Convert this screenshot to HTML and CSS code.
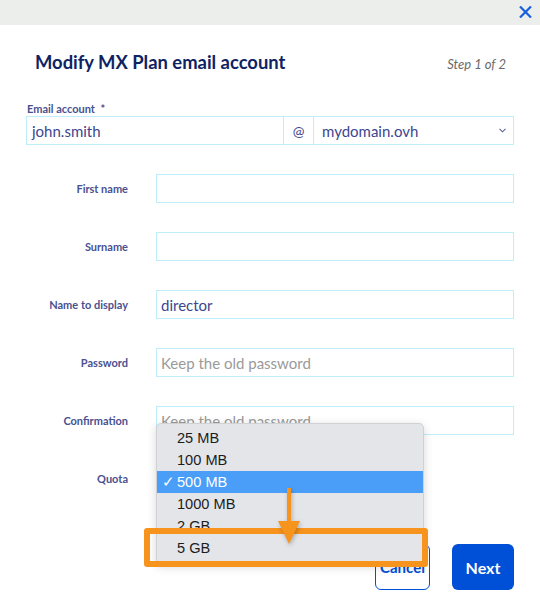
FILE: index.html
```html
<!DOCTYPE html>
<html lang="en">
<head>
<meta charset="utf-8">
<title>Modify MX Plan email account</title>
<link rel="stylesheet" href="styles.css">
</head>
<body>
<div class="topbar">
  <button class="close" aria-label="Close">
    <svg width="13" height="12" viewBox="0 0 13 12"><path d="M1 0.5 L12 11.5 M12 0.5 L1 11.5" stroke="#1a5fdb" stroke-width="2.2" fill="none"/></svg>
  </button>
</div>
<main class="modal">
  <header class="head">
    <h1 class="title">Modify MX Plan email account</h1>
    <span class="step">Step 1 of 2</span>
  </header>

  <div class="email-field">
    <div class="lbl-top">Email account <span class="req">*</span></div>
    <div class="group">
      <div class="inp user">john.smith</div>
      <div class="at">@</div>
      <div class="inp sel">
        <span>mydomain.ovh</span>
        <svg class="chev" width="7" height="5" viewBox="0 0 7 5"><path d="M0.5 0.8 L3.5 3.8 L6.5 0.8" stroke="#5a6190" stroke-width="1.1" fill="none"/></svg>
      </div>
    </div>
  </div>

  <div class="rows">
    <div class="row"><span class="lbl">First name</span><div class="inp"></div></div>
    <div class="row"><span class="lbl">Surname</span><div class="inp"></div></div>
    <div class="row"><span class="lbl">Name to display</span><div class="inp">director</div></div>
    <div class="row"><span class="lbl">Password</span><div class="inp ph">Keep the old password</div></div>
    <div class="row"><span class="lbl">Confirmation</span><div class="inp ph">Keep the old password</div></div>
    <div class="row"><span class="lbl">Quota</span>
      <div class="quota-slot">
        <ul class="dropdown">
          <li>25 MB</li>
          <li>100 MB</li>
          <li class="active"><span class="check">✓</span>500 MB</li>
          <li>1000 MB</li>
          <li>2 GB</li>
          <li>5 GB</li>
        </ul>
        <div class="highlight"></div>
        <svg class="arrow" width="24" height="58" viewBox="0 0 24 58">
          <path d="M10 0 H14 V33 H23 L12 56 L1 33 H10 Z" fill="#f7941d"/>
        </svg>
      </div>
    </div>
  </div>

  <div class="footer">
    <button class="btn cancel">Cancel</button>
    <button class="btn next">Next</button>
  </div>
</main>
</body>
</html>
```
FILE: styles.css
```css
* { box-sizing: border-box; }
html, body { margin: 0; padding: 0; background: #fff; }
body { font-family: Lato, "Open Sans", sans-serif; width: 540px; height: 608px; overflow: hidden; }

.topbar {
  height: 25px;
  background: #eceeec;
  display: flex;
  justify-content: flex-end;
  align-items: center;
  padding-right: 8px;
}
.close { border: 0; background: none; padding: 0; margin: 0; display: flex; margin-top: -1px; }

.modal { padding: 0 26px 0 26px; }

.head {
  margin-top: 27px;
  height: 20px;
  display: flex;
  justify-content: space-between;
  align-items: baseline;
  padding: 0 8px 0 9px;
}
.title {
  margin: 0;
  font-size: 18.4px;
  line-height: 20px;
  font-weight: 700;
  color: #0e2363;
}
.step {
  font-size: 13px;
  font-style: italic;
  color: #6a6a6a;
}

.email-field { margin-top: 30px; }
.lbl-top {
  font-size: 11px;
  line-height: 14px;
  font-weight: 700;
  color: #4a5190;
  padding-left: 1px;
}
.req { margin-left: 3px; }

.group { display: flex; height: 29px; }
.inp {
  height: 29px;
  border: 1px solid #bdeefa;
  display: flex;
  align-items: center;
  padding-left: 4px;
  font-size: 15px;
  color: #3d4690;
}
.user { width: 258px; padding-left: 5px; }
.at {
  width: 29px;
  height: 29px;
  border: 1px solid #bdeefa;
  border-left: 0;
  border-right: 0;
  display: flex;
  align-items: center;
  justify-content: center;
  font-size: 14px;
  color: #3d4690;
}
.sel { flex: 1; padding-left: 8px; padding-right: 7px; justify-content: space-between; }

.rows {
  margin-top: 29px;
  display: flex;
  flex-direction: column;
  gap: 29px;
}
.row {
  display: grid;
  grid-template-columns: 102px 1fr;
  column-gap: 28px;
  align-items: center;
  height: 29px;
}
.lbl {
  text-align: right;
  font-size: 11px;
  font-weight: 700;
  color: #4a5190;
}
.ph { color: #9a9a9a; }

.quota-slot { position: relative; height: 29px; }
.dropdown {
  position: absolute;
  left: 0;
  top: -41px;
  width: 268px;
  margin: 0;
  padding: 3px 0 5px;
  list-style: none;
  background: #e3e5e9;
  border: 1px solid #cfd1d5;
  border-radius: 5px;
  box-shadow: 0 2px 10px rgba(0, 0, 0, 0.16);
  font-family: "Liberation Sans", Arial, sans-serif;
  font-size: 14.6px;
  color: #1c1c1c;
  z-index: 5;
}
.dropdown li {
  height: 22px;
  line-height: 22px;
  padding-left: 20px;
  position: relative;
}
.dropdown li.active { background: #4a9ef8; color: #fff; }
.check { position: absolute; left: 5px; top: 0; font-size: 15px; }

.highlight {
  position: absolute;
  left: -12px;
  top: 64px;
  width: 284px;
  height: 39px;
  border: 6px solid #f7941d;
  border-radius: 3px;
  z-index: 6;
}
.arrow {
  position: absolute;
  left: 121px;
  top: 24px;
  z-index: 7;
  filter: drop-shadow(1px 2px 2px rgba(0,0,0,0.25));
}

.footer {
  margin-top: 51px;
  display: flex;
  justify-content: flex-end;
  gap: 22px;
}
.btn {
  height: 46px;
  border-radius: 6px;
  font-family: Lato, sans-serif;
  font-weight: 700;
  font-size: 15px;
  padding: 0;
}
.cancel {
  width: 55px;
  background: #fff;
  border: 1px solid #0050d7;
  color: #0050d7;
}
.next {
  width: 62px;
  background: #0050d7;
  border: 0;
  color: #fff;
  font-size: 16px;
}
```
